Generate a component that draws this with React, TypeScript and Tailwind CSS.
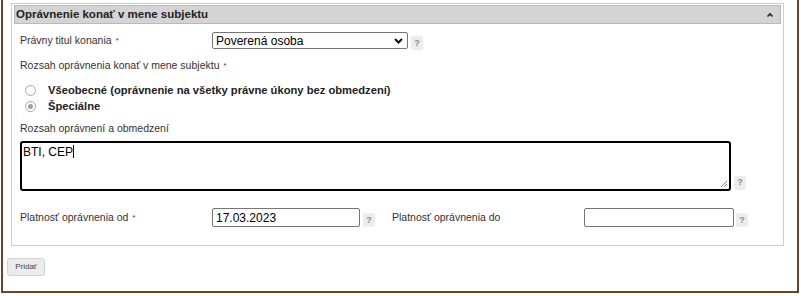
import React from "react";

function Req() {
  return <span className="text-[#e00000] text-[8px] ml-[4px] leading-none">*</span>;
}

function Help() {
  return (
    <span className="inline-flex w-[12px] h-[14px] shrink-0 items-center justify-center bg-[#ededed] rounded-[2px] text-[9px] font-bold text-[#8a8a8a] leading-none">
      ?
    </span>
  );
}

function Radio({ checked }: { checked?: boolean }) {
  return (
    <span className="w-[11px] h-[11px] rounded-full border border-[#a8a8a8] bg-white flex items-center justify-center shrink-0">
      {checked && <span className="w-[5px] h-[5px] rounded-full bg-[#a0a0a0]" />}
    </span>
  );
}

export default function App() {
  return (
    <div className="w-[804px] h-[296px] bg-white font-['Liberation_Sans',Arial,sans-serif] text-[#333]">
      <div className="ml-[1px] w-[798px] h-[293px] border-x-2 border-b-2 border-[#6a4528] pt-[3px] pl-[4px]">
        <div className="ml-[4px] w-[773px] h-[243px] border border-[#cdcdcd]">
          <div className="px-[2px] pt-[1px]">
            <div className="h-[19px] bg-[#d4d4d4] border border-[#b9b9b9] flex items-center justify-between pl-[1px] pr-[6px]">
              <span className="text-[11.5px] font-bold text-[#222]">Oprávnenie konať v mene subjektu</span>
              <svg width="8" height="6" viewBox="0 0 8 6">
                <path d="M1.5 4.5 L4 2 L6.5 4.5" stroke="#222" strokeWidth="1.6" fill="none" />
              </svg>
            </div>
          </div>
          <div className="pl-[8px]">
            <div className="mt-[8px] h-[17px] flex items-center">
              <div className="w-[192px] text-[10.5px] flex items-center">
                Právny titul konania<Req />
              </div>
              <div className="w-[196px] h-[17px] border border-[#767676] rounded-[2px] flex items-center justify-between pl-[3px] pr-[4px] text-[12px] text-black">
                <span>Poverená osoba</span>
                <svg width="9" height="6" viewBox="0 0 9 6">
                  <path d="M1 1 L4.5 4.5 L8 1" stroke="#111" strokeWidth="2" fill="none" />
                </svg>
              </div>
              <div className="ml-[3px]">
                <Help />
              </div>
            </div>

            <div className="mt-[10px] h-[14px] flex items-center text-[10.5px]">
              Rozsah oprávnenia konať v mene subjektu<Req />
            </div>

            <div className="mt-[10px] h-[15px] flex items-center">
              <div className="ml-[5px]">
                <Radio />
              </div>
              <span className="ml-[12px] text-[11.2px] font-bold text-[#222]">
                Všeobecné (oprávnenie na všetky právne úkony bez obmedzení)
              </span>
            </div>
            <div className="mt-[1px] h-[15px] flex items-center">
              <div className="ml-[5px]">
                <Radio checked />
              </div>
              <span className="ml-[12px] text-[11.2px] font-bold text-[#222]">Špeciálne</span>
            </div>

            <div className="mt-[8px] h-[14px] flex items-center text-[10.5px]">Rozsah oprávnení a obmedzení</div>

            <div className="mt-[5px] h-[51px] flex items-end">
              <div className="relative self-start w-[711px] h-[50px] border-2 border-black rounded-[3px] px-[1px] pt-[2px] text-[12px] text-black leading-[14px]">
                BTI, CEP<span className="inline-block w-[1px] h-[13px] bg-black align-[-2px]" />
                <svg className="absolute right-[1px] bottom-[1px]" width="8" height="8" viewBox="0 0 8 8">
                  <path d="M7 1 L1 7 M7 4 L4 7" stroke="#888" strokeWidth="1" />
                </svg>
              </div>
              <div className="ml-[3px]">
                <Help />
              </div>
            </div>

            <div className="mt-[16px] h-[19px] flex items-center">
              <div className="w-[192px] text-[10.5px] flex items-center">
                Platnosť oprávnenia od<Req />
              </div>
              <div className="w-[148px] h-[19px] border border-[#767676] rounded-[2px] flex items-center pl-[3px] text-[12px] text-black">
                17.03.2023
              </div>
              <div className="ml-[3px]">
                <Help />
              </div>
              <div className="ml-[17px] w-[192px] text-[10.5px]">Platnosť oprávnenia do</div>
              <div className="w-[150px] h-[19px] border border-[#767676] rounded-[2px]" />
              <div className="ml-[2px]">
                <Help />
              </div>
            </div>
          </div>
        </div>
        <div className="mt-[12px] w-[38px] h-[18px] bg-[#ececec] border border-[#d2d2d2] rounded-[3px] flex items-center justify-center text-[8px] text-[#444]">
          Pridať
        </div>
      </div>
    </div>
  );
}
